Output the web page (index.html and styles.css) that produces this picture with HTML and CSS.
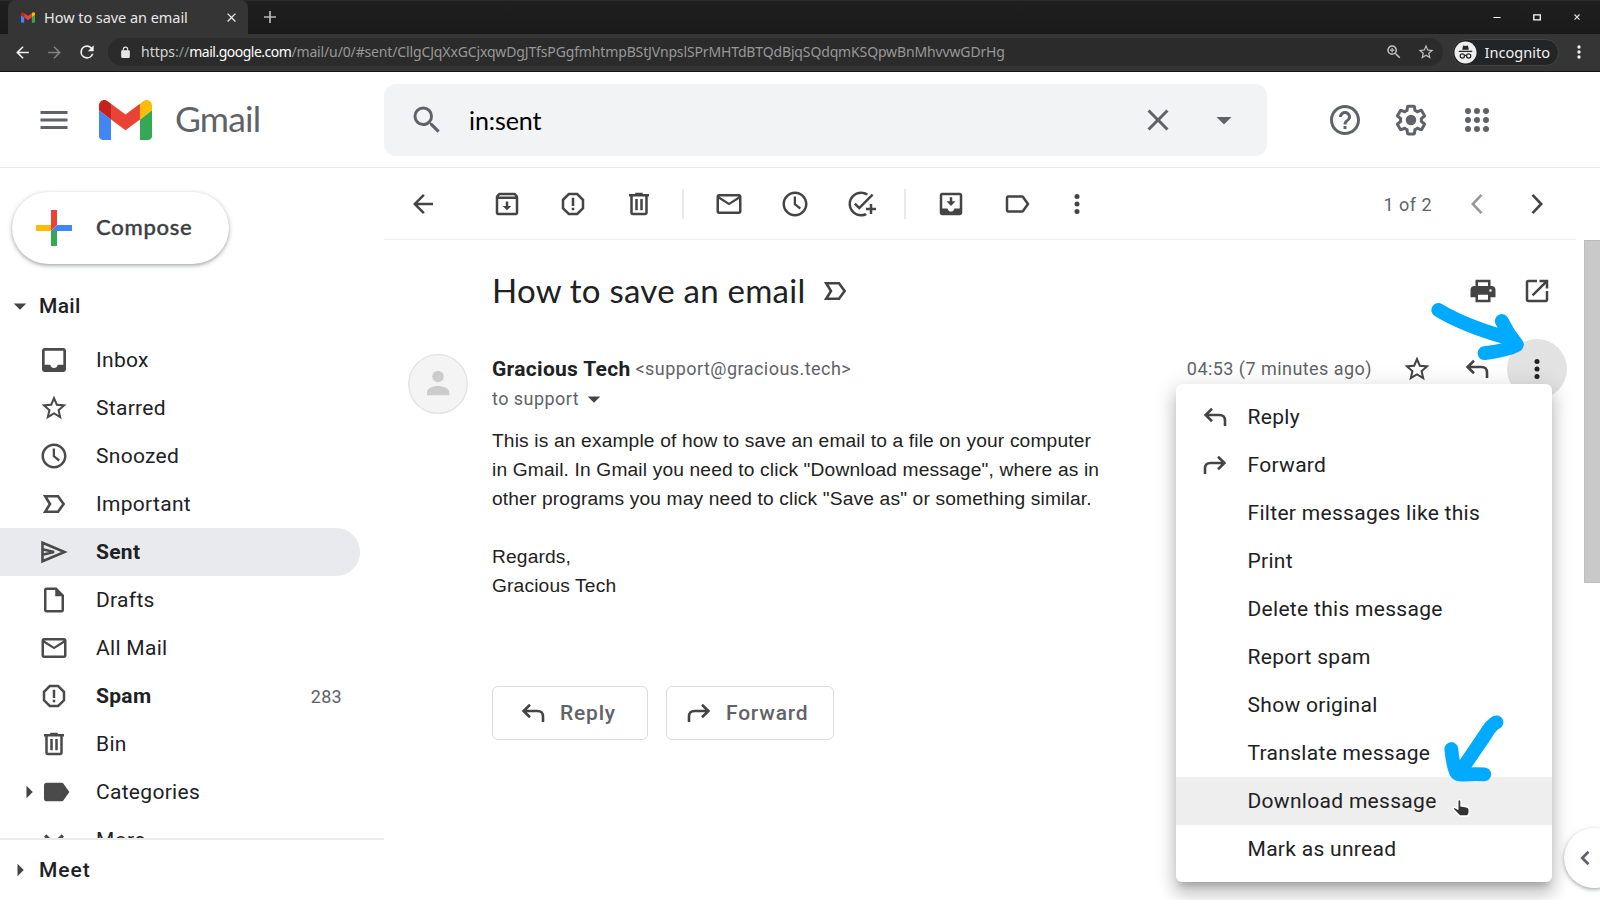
FILE: index.html
```html
<!DOCTYPE html>
<html lang="en">
<head>
<meta charset="utf-8">
<title>How to save an email</title>
<link rel="stylesheet" href="styles.css">
</head>
<body>
<svg class="defs" aria-hidden="true">
  <symbol id="gmail" viewBox="52 42 88 66"><path fill="#4285f4" d="M58 108h14V74L52 59v43c0 3.32 2.69 6 6 6"/><path fill="#34a853" d="M120 108h14c3.32 0 6-2.69 6-6V59l-20 15"/><path fill="#fbbc04" d="M120 48v26l20-15v-8c0-7.42-8.47-11.65-14.4-7.2"/><path fill="#ea4335" d="M72 74V48l24 18 24-18v26L96 92"/><path fill="#c5221f" d="M52 51v8l20 15V48l-5.600-4.200c-5.940-4.450-14.400-.22-14.400 7.200"/></symbol>
  <symbol id="menu" viewBox="0 0 24 24"><path d="M3 18h18v-2H3v2zm0-5h18v-2H3v2zm0-7v2h18V6H3z"/></symbol>
  <symbol id="search" viewBox="0 0 24 24"><path d="M15.500 14h-.79l-.28-.27A6.471 6.471 0 0 0 16 9.500 6.500 6.500 0 1 0 9.500 16c1.610 0 3.090-.59 4.230-1.570l.27.28v.79l5 4.990L20.490 19l-4.990-5zm-6 0C7.010 14 5 11.990 5 9.500S7.010 5 9.500 5 14 7.010 14 9.500 11.990 14 9.500 14z"/></symbol>
  <symbol id="close" viewBox="0 0 24 24"><path d="M19 6.410L17.590 5 12 10.590 6.410 5 5 6.410 10.590 12 5 17.590 6.410 19 12 13.410 17.590 19 19 17.590 13.410 12z"/></symbol>
  <symbol id="down" viewBox="0 0 24 24"><path d="M7 10l5 5 5-5z"/></symbol>
  <symbol id="right" viewBox="0 0 24 24"><path d="M10 17l5-5-5-5z"/></symbol>
  <symbol id="help" viewBox="0 0 24 24"><path d="M11 18h2v-2h-2v2zm1-16C6.480 2 2 6.480 2 12s4.480 10 10 10 10-4.480 10-10S17.520 2 12 2zm0 18c-4.410 0-8-3.590-8-8s3.590-8 8-8 8 3.590 8 8-3.590 8-8 8zm0-14c-2.210 0-4 1.790-4 4h2c0-1.100.9-2 2-2s2 .9 2 2c0 2-3 1.750-3 5h2c0-2.250 3-2.500 3-5 0-2.210-1.790-4-4-4z"/></symbol>
  <symbol id="gear" viewBox="0 0 24 24"><path d="M13.850 22.250h-3.700c-.74 0-1.360-.54-1.450-1.270l-.27-1.890c-.27-.14-.53-.29-.79-.46l-1.800.72c-.7.26-1.470-.03-1.810-.65L2.200 15.530c-.35-.66-.2-1.440.36-1.880l1.530-1.190c-.01-.15-.02-.3-.02-.46 0-.15.01-.31.02-.46l-1.520-1.190c-.59-.45-.74-1.260-.37-1.880l1.850-3.190c.34-.62 1.110-.9 1.790-.63l1.810.73c.26-.17.52-.32.78-.46l.27-1.910c.09-.7.71-1.250 1.440-1.250h3.700c.74 0 1.360.54 1.450 1.270l.27 1.890c.27.14.53.29.79.46l1.800-.72c.71-.26 1.480.03 1.820.65l1.840 3.180c.36.66.2 1.440-.36 1.880l-1.520 1.190c.01.15.02.3.02.46s-.01.31-.02.46l1.520 1.190c.56.45.72 1.230.37 1.860l-1.860 3.220c-.34.62-1.110.9-1.800.63l-1.800-.72c-.26.17-.52.32-.78.46l-.27 1.910c-.1.68-.72 1.220-1.460 1.220zm-3.230-2h2.760l.37-2.550.53-.22c.44-.18.88-.44 1.340-.78l.45-.34 2.380.96 1.380-2.400-2.030-1.580.07-.56c.03-.26.06-.51.06-.78s-.03-.53-.06-.78l-.07-.56 2.030-1.580-1.390-2.400-2.390.96-.45-.35c-.42-.32-.87-.58-1.330-.77l-.52-.22-.37-2.550h-2.760l-.37 2.550-.53.21c-.44.19-.88.44-1.340.79l-.45.33-2.380-.95-1.390 2.390 2.030 1.580-.07.56a7 7 0 0 0-.06.79c0 .26.02.53.06.78l.07.56-2.030 1.580 1.380 2.400 2.390-.96.45.35c.43.33.86.58 1.330.77l.53.22.38 2.550z"/><circle cx="12" cy="12" r="3.500"/></symbol>
  <symbol id="apps" viewBox="0 0 24 24"><circle cx="6" cy="6" r="2"/><circle cx="12" cy="6" r="2"/><circle cx="18" cy="6" r="2"/><circle cx="6" cy="12" r="2"/><circle cx="12" cy="12" r="2"/><circle cx="18" cy="12" r="2"/><circle cx="6" cy="18" r="2"/><circle cx="12" cy="18" r="2"/><circle cx="18" cy="18" r="2"/></symbol>
  <symbol id="back" viewBox="0 0 24 24"><path d="M20 11H7.830l5.590-5.590L12 4l-8 8 8 8 1.410-1.410L7.830 13H20v-2z"/></symbol>
  <symbol id="fwdnav" viewBox="0 0 24 24"><path d="M12 4l-1.410 1.410L16.170 11H4v2h12.170l-5.580 5.590L12 20l8-8z"/></symbol>
  <symbol id="reload" viewBox="0 0 24 24"><path d="M17.650 6.350A7.958 7.958 0 0 0 12 4a8 8 0 1 0 7.730 10h-2.080A6 6 0 1 1 12 6c1.660 0 3.140.69 4.220 1.780L13 11h7V4l-2.350 2.350z"/></symbol>
  <symbol id="lock" viewBox="0 0 24 24"><path d="M18 8h-1V6A5 5 0 0 0 7 6v2H6c-1.100 0-2 .9-2 2v10c0 1.100.9 2 2 2h12c1.100 0 2-.9 2-2V10c0-1.100-.9-2-2-2zM9 8V6a3 3 0 0 1 6 0v2H9z"/></symbol>
  <symbol id="zoom" viewBox="0 0 24 24"><use href="#search" width="24" height="24"/><path d="M8.700 6.500h1.600v2.200h2.200v1.600h-2.200v2.200H8.700v-2.200H6.500V8.700h2.200z"/></symbol>
  <symbol id="archive" viewBox="0 0 24 24"><path fill-rule="evenodd" d="M20.540 5.230l-1.390-1.680C18.880 3.210 18.470 3 18 3H6c-.47 0-.88.21-1.160.55L3.460 5.230C3.170 5.570 3 6.020 3 6.500V19c0 1.100.9 2 2 2h14c1.100 0 2-.9 2-2V6.500c0-.48-.17-.93-.46-1.270zM6.240 5h11.520l.83 1H5.420l.82-1zM5 19V8h14v11zM13 10h-2v3.500H8.500L12 17l3.500-3.500H13z"/></symbol>
  <symbol id="spam" viewBox="0 0 24 24"><path fill-rule="evenodd" d="M15.730 3H8.270L3 8.270v7.460L8.270 21h7.460L21 15.730V8.270L15.730 3zM19 14.900L14.900 19H9.100L5 14.900V9.100L9.100 5h5.800L19 9.100v5.800zM11 7h2v6.500h-2zM11 15h2v2h-2z"/></symbol>
  <symbol id="trash" viewBox="0 0 24 24"><path fill-rule="evenodd" d="M15 4V3H9v1H4v2h1v13c0 1.100.9 2 2 2h10c1.100 0 2-.9 2-2V6h1V4h-5zm2 15H7V6h10v13zM9 8h2v9H9zM13 8h2v9h-2z"/></symbol>
  <symbol id="mail" viewBox="0 0 24 24"><path fill-rule="evenodd" d="M20 4H4c-1.100 0-2 .9-2 2v12c0 1.100.9 2 2 2h16c1.100 0 2-.9 2-2V6c0-1.100-.9-2-2-2zM20 18H4V8l8 5 8-5v10zM12 11L4.300 6h15.400L12 11z"/></symbol>
  <symbol id="clock" viewBox="0 0 24 24"><path d="M11.990 2C6.470 2 2 6.480 2 12s4.470 10 9.990 10C17.520 22 22 17.520 22 12S17.520 2 11.990 2zM12 20c-4.420 0-8-3.580-8-8s3.580-8 8-8 8 3.580 8 8-3.580 8-8 8zm.8-14H11v6.500l4.700 3.800 1.100-1.500-4-3.100z"/></symbol>
  <symbol id="task" viewBox="0 0 24 24"><path d="M22 5.180L10.590 16.600l-4.240-4.240 1.410-1.410 2.830 2.830 10-10L22 5.180zM12 20c-4.410 0-8-3.590-8-8s3.590-8 8-8c1.570 0 3.040.46 4.280 1.250l1.450-1.450C16.100 2.670 14.130 2 12 2 6.480 2 2 6.480 2 12s4.480 10 10 10c1.730 0 3.360-.44 4.780-1.220l-1.500-1.500c-1 .46-2.110.72-3.280.72zm7-5h-3v2h3v3h2v-3h3v-2h-3v-3h-2v3z"/></symbol>
  <symbol id="inbox" viewBox="0 0 24 24"><path fill-rule="evenodd" d="M19 3H5c-1.100 0-2 .9-2 2v14c0 1.100.9 2 2 2h14c1.100 0 2-.9 2-2V5c0-1.100-.9-2-2-2zM19 15.500h-4.200c-.4 1.600-1.500 2.500-2.800 2.500s-2.400-.9-2.800-2.500H5V5h14z"/></symbol>
  <symbol id="moveto" viewBox="0 0 24 24"><use href="#inbox" width="24" height="24"/><path d="M11 6.500h2v3.300h2.600L12 13.500 8.400 9.800H11z"/></symbol>
  <symbol id="label" viewBox="0 0 24 24"><path d="M17.630 5.840C17.270 5.330 16.670 5 16 5L5 5.010C3.900 5.010 3 5.900 3 7v10c0 1.100.9 1.990 2 1.990L16 19c.67 0 1.270-.33 1.630-.84L22 12l-4.370-6.160zM16 17H5V7h11l3.550 5L16 17z"/></symbol>
  <symbol id="tag" viewBox="0 0 24 24"><path d="M17.630 5.840C17.270 5.330 16.670 5 16 5L5 5.010C3.900 5.010 3 5.900 3 7v10c0 1.100.9 1.990 2 1.990L16 19c.67 0 1.270-.33 1.630-.84L22 12z"/></symbol>
  <symbol id="more" viewBox="0 0 24 24"><circle cx="12" cy="6" r="2"/><circle cx="12" cy="12" r="2"/><circle cx="12" cy="18" r="2"/></symbol>
  <symbol id="star" viewBox="0 0 24 24"><path d="M22 9.240l-7.190-.62L12 2 9.190 8.630 2 9.240l5.460 4.730L5.820 21 12 17.270 18.180 21l-1.630-7.030L22 9.240zM12 15.400l-3.760 2.270 1-4.280-3.320-2.880 4.380-.38L12 6.100l1.710 4.040 4.380.38-3.320 2.880 1 4.280L12 15.400z"/></symbol>
  <symbol id="important" viewBox="-15 -15 30 30"><path class="line" d="M-8.800-7.700H4L9.600 0 4 7.700H-8.800L-4 0z"/></symbol>
  <symbol id="sent" viewBox="-15 -15 30 30"><path class="line" d="M-11.500-9.300L10.500 0-11.500 9.300zM-11.500-2.700L0 0-11.500 2.700"/></symbol>
  <symbol id="draft" viewBox="0 0 24 24"><path fill-rule="evenodd" d="M14 2H6c-1.100 0-2 .9-2 2v16c0 1.100.9 2 2 2h12c1.100 0 2-.9 2-2V8l-6-6zM6 20V4h7v5h5v11z"/></symbol>
  <symbol id="expand" viewBox="0 0 24 24"><path d="M16.590 8.590L12 13.170 7.410 8.590 6 10l6 6 6-6z"/></symbol>
  <symbol id="print" viewBox="0 0 24 24"><path fill-rule="evenodd" d="M19 8h-1V3H6v5H5c-1.660 0-3 1.340-3 3v6h4v4h12v-4h4v-6c0-1.660-1.340-3-3-3zM8 5h8v3H8zM16 19H8v-4h8zM18 12.500a1 1 0 1 1 0-2 1 1 0 0 1 0 2z"/></symbol>
  <symbol id="popout" viewBox="0 0 24 24"><path d="M19 19H5V5h7V3H5c-1.110 0-2 .9-2 2v14c0 1.100.89 2 2 2h14c1.100 0 2-.9 2-2v-7h-2v7zM14 3v2h3.590l-9.830 9.830 1.410 1.410L19 6.410V10h2V3h-7z"/></symbol>
  <symbol id="reply" viewBox="-15 -15 30 30"><path class="line" d="M-3-8.200L-9.400-2l6.400 6.300M-9.400-2H4.500Q10-2 10 3.500V9"/></symbol>
  <symbol id="forward" viewBox="-15 -15 30 30"><path class="line" d="M3-8.200L9.400-2 3 4.300M9.400-2H-4.500Q-10-2-10 3.500V9"/></symbol>
  <symbol id="prev" viewBox="-15 -15 30 30"><path class="line" d="M4.500-9.200L-4.200 0l8.700 9.200"/></symbol>
  <symbol id="next" viewBox="-15 -15 30 30"><path class="line" d="M-4.500-9.200L4.200 0l-8.700 9.200"/></symbol>
</svg>

<div class="browser">
  <div class="tabs">
    <div class="tab"><svg class="favicon"><use href="#gmail"/></svg><span class="tab-title">How to save an email</span><svg class="i-tabclose"><use href="#close"/></svg></div>
    <svg class="newtab" viewBox="0 0 12 12"><path d="M6 0v12M0 6h12" stroke="#b8b8b8" stroke-width="1.700"/></svg>
    <div class="window-controls">
      <svg viewBox="0 0 12 12"><path d="M2.500 6.500h7" stroke="#fff"/></svg>
      <svg viewBox="0 0 12 12"><path d="M2.800 3.800h6.500v5H2.800z" fill="none" stroke="#fff" stroke-width="1.300"/></svg>
      <svg viewBox="0 0 12 12"><path d="M3.500 3.500l5 5.200M8.500 3.500l-5 5.200" stroke="#ddd" stroke-width="1.200"/></svg>
    </div>
  </div>
  <div class="addressbar">
    <svg class="nav"><use href="#back"/></svg>
    <svg class="nav dim"><use href="#fwdnav"/></svg>
    <svg class="nav reload"><use href="#reload"/></svg>
    <div class="omnibox">
      <svg class="lock"><use href="#lock"/></svg>
      <span class="url"><span class="scheme">https<i>://</i></span><b>mail.google.com</b><span class="path">/mail/u/0/#sent/CllgCJqXxGCjxqwDgJTfsPGgfmhtmpBStJVnpslSPrMHTdBTQdBjqSQdqmKSQpwBnMhvvwGDrHg</span></span>
      <svg class="omni-icon"><use href="#zoom"/></svg>
      <svg class="omni-icon"><use href="#star"/></svg>
    </div>
    <div class="incognito">
      <svg viewBox="0 0 24 24"><circle cx="12" cy="12" r="11.500" fill="#eee"/><path fill="#242527" d="M8.500 9l1-4.200 2.500.5 2.500-.5 1 4.200zM5 10.200h14v1.400H5z"/><g fill="none" stroke="#242527" stroke-width="1.300"><circle cx="8.700" cy="15.600" r="2.200"/><circle cx="15.300" cy="15.600" r="2.200"/><path d="M10.900 15.300q1.100-.8 2.200 0"/></g></svg>
      <span>Incognito</span>
    </div>
    <svg class="chrome-menu"><use href="#more"/></svg>
  </div>
</div>

<header class="header">
  <svg class="i36 hamburger"><use href="#menu"/></svg>
  <svg class="logo"><use href="#gmail"/></svg>
  <span class="brand">Gmail</span>
  <div class="searchbox">
    <svg class="i36"><use href="#search"/></svg>
    <span class="query">in:sent</span>
    <svg class="i36"><use href="#close"/></svg>
    <svg class="i36"><use href="#down"/></svg>
  </div>
  <div class="header-actions">
    <svg class="i36"><use href="#help"/></svg>
    <svg class="i36"><use href="#gear"/></svg>
    <svg class="i36"><use href="#apps"/></svg>
  </div>
</header>

<div class="layout">
  <aside class="sidebar">
    <div class="folders">
      <div class="compose"><svg viewBox="0 0 36 36"><path fill="#ea4335" d="M15 0h6v15l-6 6z"/><path fill="#fbbc04" d="M0 15h15v6H0z"/><path fill="#34a853" d="M15 21h6v15h-6z"/><path fill="#4285f4" d="M21 15h15v6H15z"/></svg><span>Compose</span></div>
      <div class="section"><svg class="i30"><use href="#down"/></svg><span>Mail</span></div>
      <div class="folder"><svg class="i32"><use href="#inbox"/></svg><span>Inbox</span></div>
      <div class="folder"><svg class="i30"><use href="#star"/></svg><span>Starred</span></div>
      <div class="folder"><svg class="i30"><use href="#clock"/></svg><span>Snoozed</span></div>
      <div class="folder"><svg class="i30"><use href="#important"/></svg><span>Important</span></div>
      <div class="folder active"><svg class="i30"><use href="#sent"/></svg><span>Sent</span></div>
      <div class="folder"><svg class="i30"><use href="#draft"/></svg><span>Drafts</span></div>
      <div class="folder"><svg class="i30"><use href="#mail"/></svg><span>All Mail</span></div>
      <div class="folder unread"><svg class="i30"><use href="#spam"/></svg><span>Spam</span><em>283</em></div>
      <div class="folder"><svg class="i30"><use href="#trash"/></svg><span>Bin</span></div>
      <div class="folder nested"><svg class="i30"><use href="#right"/></svg><svg class="i30 tag"><use href="#tag"/></svg><span>Categories</span></div>
      <div class="folder"><svg class="expand"><use href="#expand"/></svg><span>More</span></div>
    </div>
    <div class="section meet"><svg class="i30"><use href="#right"/></svg><span>Meet</span></div>
  </aside>

  <main class="main">
    <div class="toolbar">
      <div class="cell first"><svg class="i30"><use href="#back"/></svg></div>
      <div class="cell"><svg class="i30"><use href="#archive"/></svg></div>
      <div class="cell"><svg class="i30"><use href="#spam"/></svg></div>
      <div class="cell"><svg class="i30"><use href="#trash"/></svg></div>
      <div class="divider"></div>
      <div class="cell"><svg class="i30"><use href="#mail"/></svg></div>
      <div class="cell"><svg class="i30"><use href="#clock"/></svg></div>
      <div class="cell"><svg class="i30"><use href="#task"/></svg></div>
      <div class="divider"></div>
      <div class="cell"><svg class="i30"><use href="#moveto"/></svg></div>
      <div class="cell"><svg class="i30"><use href="#label"/></svg></div>
      <div class="cell narrow"><svg class="i30"><use href="#more"/></svg></div>
      <span class="count">1 of 2</span>
      <div class="cell page disabled"><svg class="i30"><use href="#prev"/></svg></div>
      <div class="cell page"><svg class="i30"><use href="#next"/></svg></div>
    </div>
    <div class="subject">
      <h1>How to save an email</h1>
      <svg class="i30"><use href="#important"/></svg>
      <div class="subject-actions">
        <div class="cell printer"><svg class="i30"><use href="#print"/></svg></div>
        <div class="cell page"><svg class="i30"><use href="#popout"/></svg></div>
      </div>
    </div>
    <div class="message">
      <svg class="avatar" viewBox="0 0 60 60"><circle cx="30" cy="30" r="29.300" fill="#f4f4f4" stroke="#e2e2e2" stroke-width="1.300"/><circle cx="30" cy="22.500" r="5.800" fill="#ccc"/><path fill="#ccc" d="M19 41.200v-3c0-3.700 5.500-6.200 11-6.200s11.200 2.500 11.200 6.200v3z"/></svg>
      <div class="content">
        <div class="from">
          <b>Gracious Tech</b><span class="address">&lt;support@gracious.tech&gt;</span>
          <span class="time">04:53 (7 minutes ago)</span>
          <div class="cell page"><svg class="i30"><use href="#star"/></svg></div>
          <div class="cell page"><svg class="i30"><use href="#reply"/></svg></div>
          <div class="cell page pressed"><svg class="i30"><use href="#more"/></svg></div>
        </div>
        <div class="to"><span>to support</span><svg class="i30"><use href="#down"/></svg></div>
        <div class="body">
          <p>This is an example of how to save an email to a file on your computer<br>in Gmail. In Gmail you need to click "Download message", where as in<br>other programs you may need to click "Save as" or something similar.</p>
          <p>Regards,<br>Gracious Tech</p>
        </div>
        <div class="buttons">
          <div class="button"><svg class="i30"><use href="#reply"/></svg><span>Reply</span></div>
          <div class="button forward"><svg class="i30"><use href="#forward"/></svg><span>Forward</span></div>
        </div>
      </div>
    </div>
  </main>
  <div class="scroll"><div class="thumb"></div></div>
</div>

<div class="sidepanel"><svg viewBox="0 0 12 16"><path d="M9.500 1.700L3.200 8l6.300 6.300" fill="none" stroke="#5f6368" stroke-width="2.700"/></svg></div>

<div class="popup">
  <div class="option"><svg class="i30"><use href="#reply"/></svg><span>Reply</span></div>
  <div class="option"><svg class="i30"><use href="#forward"/></svg><span>Forward</span></div>
  <div class="option"><span>Filter messages like this</span></div>
  <div class="option"><span>Print</span></div>
  <div class="option"><span>Delete this message</span></div>
  <div class="option"><span>Report spam</span></div>
  <div class="option"><span>Show original</span></div>
  <div class="option"><span>Translate message</span></div>
  <div class="option hover"><span>Download message</span></div>
  <div class="option"><span>Mark as unread</span></div>
</div>

<svg class="annotations" viewBox="0 0 1600 900">
  <g fill="none" stroke="#00aaff" stroke-width="13.800" stroke-linecap="round" stroke-linejoin="round">
    <path d="M1438.300 310Q1463 325 1504 337L1516.500 345"/>
    <path d="M1501.800 321Q1508 334 1516.800 344.500Q1512 349.500 1484.500 353.200"/>
    <path d="M1496.500 722.300Q1491 725 1485.500 734.500L1460 772"/>
    <path d="M1451.300 749Q1453 766 1456.500 773 1457.500 775 1463 774.500Q1475 773.800 1484.300 774.300"/>
  </g>
  <path d="M1457.800 801.300c0-2.200 3.200-2.200 3.200 0v4.500l5.300.9c2 .4 2.900 1.400 2.900 3v2.300c0 2-.9 3.600-2 4h-7.400l-5.600-5.800c-2-2.200-.8-3.200 1-2.500l2.600 1.300z" fill="#333" stroke="#fff" stroke-width="1.400"/>
</svg>
</body>
</html>
```
FILE: styles.css
```css
* { box-sizing: border-box; }
body {
  margin: 0;
  width: 1600px;
  height: 900px;
  overflow: hidden;
  position: relative;
  display: flex;
  flex-direction: column;
  background: #fff;
  color: #202124;
  font-family: Roboto, sans-serif;
  font-size: 21px;
  letter-spacing: .3px;
}
svg { display: block; flex: none; fill: currentColor; overflow: visible; }
.defs { position: absolute; width: 0; height: 0; }
.line { fill: none; stroke: currentColor; stroke-width: 2.6px; }
.i30 { width: 30px; height: 30px; }
.i32 { width: 32px; height: 32px; margin: 0 -1px; }
.i36 { width: 36px; height: 36px; }

/* Browser frame */
.browser { height: 72px; background: #353535; border-bottom: 1px solid #141414; font-family: "Noto Sans", sans-serif; letter-spacing: 0; flex: none; }
.tabs { height: 34px; display: flex; align-items: center; padding-left: 8px; background: linear-gradient(#2a2a2a 1px, #1f1f1f 1px, #1a1a1a); }
.tab { width: 240px; height: 34px; border-radius: 8px 8px 0 0; background: #353535; display: flex; align-items: center; padding: 0 9px 0 13px; color: #e8e8e8; }
.favicon { width: 14px; height: 11px; }
.tab-title { font-size: 14.5px; letter-spacing: -.05px; margin: -1px 0 0 9px; flex: 1; white-space: nowrap; }
.i-tabclose { width: 15px; height: 15px; }
.newtab { width: 12px; height: 12px; margin-left: 16px; }
.window-controls { display: flex; gap: 28px; margin-left: auto; padding-right: 17px; }
.window-controls svg { width: 12px; height: 12px; }
.addressbar { height: 37px; display: flex; align-items: center; padding: 0 11px 1px 13px; color: #f1f1f1; }
.nav { width: 19px; height: 19px; margin-right: 13px; }
.dim { color: #818181; }
.reload { width: 20px; height: 20px; margin-right: 11px; }
.omnibox { width: 1335px; height: 28px; border-radius: 14px; background: #2b2b2b; display: flex; align-items: center; padding: 0 8px 0 11px; }
.lock { width: 13px; height: 13px; color: #e5e5e5; }
.url { font-size: 14px; margin: -1px 0 0 9px; flex: 1; white-space: nowrap; color: #989898; letter-spacing: -.14px; }
.url b { font-weight: 400; color: #fff; letter-spacing: -.5px; }
.scheme { color: #d5d5d5; letter-spacing: 0; }
.scheme i { font-style: normal; color: #989898; }
.omni-icon { width: 18px; height: 18px; margin-left: 14px; color: #c2c2c2; }
.incognito { width: 107px; height: 27px; border-radius: 14px; border: 1px solid #434343; background: #232426; margin-left: 9px; padding-left: 1px; display: flex; align-items: center; font-size: 14.6px; }
.incognito svg { width: 23px; height: 23px; }
.incognito span { margin: -1px 0 0 7.5px; }
.chrome-menu { width: 20px; height: 20px; margin-left: 10px; }

/* Gmail header */
.header { height: 96px; flex: none; display: flex; align-items: center; border-bottom: 1.5px solid #e8eaed; color: #5f6368; }
.hamburger { margin-left: 36px; }
.logo { width: 53px; height: 40px; margin-left: 27px; }
.brand { width: 209px; margin: -2px 0 0 23px; font-family: Lato, sans-serif; font-size: 35.5px; letter-spacing: -.8px; }
.searchbox { width: 883px; height: 72px; border-radius: 12px; background: #f1f3f4; display: flex; align-items: center; padding: 0 25px; gap: 30px; }
.query { flex: 1; margin-left: -6px; color: #000; font-family: Lato, sans-serif; font-size: 25px; letter-spacing: -.1px; }
.header-actions { display: flex; gap: 30px; margin-left: 60px; }

.layout { flex: 1; min-height: 0; display: flex; }

/* Sidebar */
.sidebar { width: 384px; display: flex; flex-direction: column; }
.folders { height: 672px; overflow: hidden; border-bottom: 2px solid #ebebeb; padding-top: 24px; }
.compose { width: 217px; height: 72px; margin-left: 12px; border-radius: 36px; padding-left: 24px; display: flex; align-items: center; gap: 24px; color: #3c4043; font: 500 22px Lato, sans-serif; letter-spacing: .75px; box-shadow: 0 1.5px 3px rgba(60,64,67,.302), 0 1.5px 4.5px 1.5px rgba(60,64,67,.149); }
.compose span { margin-top: -4px; -webkit-text-stroke: .4px currentColor; }
.compose svg { width: 36px; height: 36px; }
.section { height: 48px; display: flex; align-items: center; padding-left: 5px; gap: 4px; font-weight: 500; }
.section svg, .nested svg:first-child { color: #444; }
.compose + .section { margin-top: 18px; margin-bottom: 6px; }
.meet { height: 60px; letter-spacing: 1px; }
.folder { width: 360px; height: 48px; border-radius: 0 24px 24px 0; display: flex; align-items: center; padding: 0 18px 0 39px; gap: 27px; }
.folder svg { color: #4a4a4a; }
.active { background: #e8eaed; font-weight: 700; }
.unread { font-weight: 700; }
.folder em { margin-left: auto; font: 400 18px Roboto, sans-serif; letter-spacing: .3px; color: #5f6368; }
.nested { padding-left: 14px; gap: 0; }
.nested .tag { width: 32px; height: 32px; margin: 0 24px 0 -4px; }
.expand { width: 40px; height: 40px; margin: 0 -5px; }

/* Message view */
.main { width: 1192px; }
.toolbar { height: 72px; display: flex; align-items: center; padding-right: 9px; border-bottom: 1.5px solid #eceff1; color: #444; }
.cell { width: 66px; display: flex; justify-content: center; }
.first { width: 78px; margin-right: 12px; }
.narrow { width: 54px; }
.page { width: 60px; }
.disabled { color: #999; }
.divider { width: 2px; height: 30px; margin: 0 12px 0 10px; background: #e8eaed; }
.count { margin: 1px 15px 0 auto; font-size: 18px; color: #5f6368; letter-spacing: .45px; }
.subject { height: 102px; padding: 0 9px 0 108px; display: flex; align-items: center; color: #444; }
.subject h1 { margin: -3px 15px 0 0; font: 400 33px Lato, sans-serif; letter-spacing: .25px; color: #202124; }
.subject-actions { display: flex; margin-left: auto; }
.printer { width: 48px; }
.message { display: flex; padding: 0 9px 0 24px; }
.avatar { width: 60px; height: 60px; margin: 12px 24px 0 0; }
.content { flex: 1; }
.from { height: 54px; display: flex; align-items: center; font-size: 18px; letter-spacing: .45px; color: #5f6368; }
.from b { font-size: 21px; letter-spacing: .3px; color: #202124; margin-right: 5px; }
.address { margin-top: -1px; }
.from .page { color: #444; }
.time { margin: -1px 15px 0 auto; }
.from .pressed { height: 60px; margin: -3px 0; align-items: center; border-radius: 50%; background: #e2e2e2; color: #202124; }
.to { height: 24px; margin-top: -9px; display: flex; align-items: center; font-size: 18px; letter-spacing: .45px; color: #5f6368; margin-bottom: 15px; }
.to span { margin-top: -2px; }
.to svg { color: #444; }
.body { font: 19.2px/29px "Liberation Sans", Arial, sans-serif; letter-spacing: .15px; color: #222; }
.body p { margin: 0 0 29px; }
.buttons { display: flex; gap: 18px; margin-top: 86px; }
.button { width: 156px; height: 54px; border: 1.5px solid #dadce0; border-radius: 6px; padding-left: 25px; display: flex; align-items: center; gap: 12px; color: #444; font: 500 21px Roboto, sans-serif; letter-spacing: .8px; }
.button span { color: #5f6368; }
.forward { width: 168px; padding-left: 17px; }
.scroll { width: 24px; padding: 72px 0 0 7.5px; }
.thumb { height: 343px; background: #c9c9c9; border: 1px solid #bdbdbd; border-right: 0; }

/* Overlays */
.sidepanel { position: absolute; left: 1564px; top: 828px; width: 60px; height: 60px; border-radius: 50%; padding: 22px 15px; background: #fff; box-shadow: 0 1.5px 3px rgba(60,64,67,.3), 0 1.5px 5px 1px rgba(60,64,67,.15); }
.sidepanel svg { width: 12px; height: 16px; }
.popup { position: absolute; left: 1176px; top: 384px; width: 376px; height: 498px; padding: 9px 0; border-radius: 6px; background: #fff; box-shadow: 0 12px 15px 1.5px rgba(0,0,0,.14), 0 4.5px 21px 3px rgba(0,0,0,.12), 0 7.5px 7.5px -4.5px rgba(0,0,0,.2); }
.option { height: 48px; display: flex; align-items: center; padding-left: 71.5px; }
.option svg { margin: 0 18px 0 -48px; color: #444; }
.hover { background: #eee; }
.annotations { position: absolute; left: 0; top: 0; width: 1600px; height: 900px; pointer-events: none; }
```
